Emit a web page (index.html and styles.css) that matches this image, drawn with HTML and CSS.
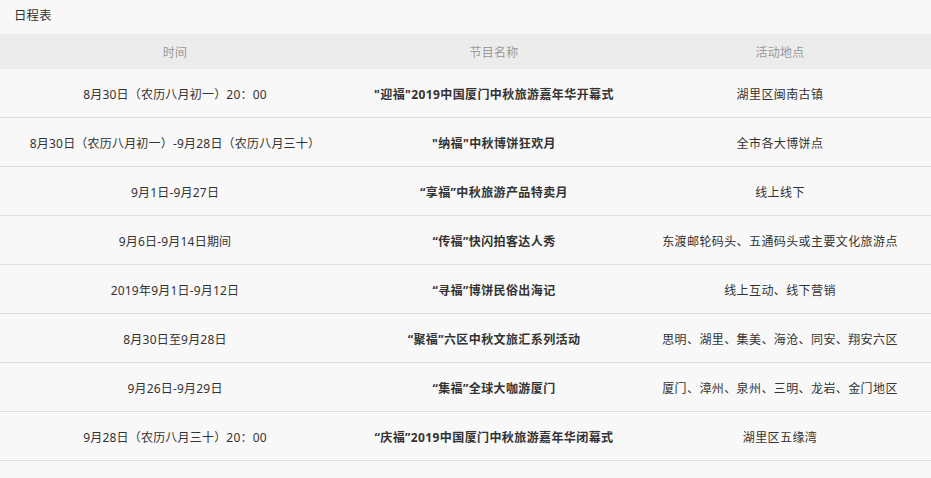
FILE: index.html
```html
<!DOCTYPE html>
<html lang="zh-CN">
<head>
<meta charset="utf-8">
<title>日程表</title>
<link rel="stylesheet" href="styles.css">
</head>
<body>
<div class="page">
  <div class="title">日程表</div>
  <table class="schedule">
    <colgroup>
      <col class="c-time">
      <col class="c-name">
      <col class="c-place">
    </colgroup>
    <thead>
      <tr><th>时间</th><th>节目名称</th><th class="place">活动地点</th></tr>
    </thead>
    <tbody>
      <tr><td>8月30日（农历八月初一）20：00</td><td class="name">"迎福"2019中国厦门中秋旅游嘉年华开幕式</td><td class="place">湖里区闽南古镇</td></tr>
      <tr><td>8月30日（农历八月初一）-9月28日（农历八月三十）</td><td class="name">"纳福"中秋博饼狂欢月</td><td class="place">全市各大博饼点</td></tr>
      <tr><td>9月1日-9月27日</td><td class="name">“享福”中秋旅游产品特卖月</td><td class="place">线上线下</td></tr>
      <tr><td>9月6日-9月14日期间</td><td class="name">“传福”快闪拍客达人秀</td><td class="place">东渡邮轮码头、五通码头或主要文化旅游点</td></tr>
      <tr><td>2019年9月1日-9月12日</td><td class="name">“寻福”博饼民俗出海记</td><td class="place">线上互动、线下营销</td></tr>
      <tr><td>8月30日至9月28日</td><td class="name">“聚福”六区中秋文旅汇系列活动</td><td class="place">思明、湖里、集美、海沧、同安、翔安六区</td></tr>
      <tr><td>9月26日-9月29日</td><td class="name">“集福”全球大咖游厦门</td><td class="place">厦门、漳州、泉州、三明、龙岩、金门地区</td></tr>
      <tr><td>9月28日（农历八月三十）20：00</td><td class="name">“庆福”2019中国厦门中秋旅游嘉年华闭幕式</td><td class="place">湖里区五缘湾</td></tr>
    </tbody>
  </table>
</div>
</body>
</html>
```
FILE: styles.css
```css
html, body {
  margin: 0;
  padding: 0;
  background: #f8f8f8;
}
body {
  font-family: "Noto Sans", "Noto Sans CJK SC", sans-serif;
  font-size: 12px;
  color: #333;
}
.page {
  width: 931px;
}
.title {
  height: 34px;
  line-height: 32px;
  padding-left: 14px;
  color: #333;
  font-size: 12.5px;
}
.schedule {
  width: 100%;
  border-collapse: collapse;
  table-layout: fixed;
}
.c-time { width: 350px; }
.c-name { width: 288px; }
.c-place { width: 293px; }
.schedule th {
  height: 35px;
  padding: 0;
  background: #ececec;
  color: #999;
  font-weight: normal;
  text-align: center;
  letter-spacing: 0.3px;
}
.schedule td {
  height: 47px;
  padding: 1px 0 0 0;
  text-align: center;
  border-bottom: 1px solid #dcdcdc;
  white-space: nowrap;
  letter-spacing: 0.2px;
}
.schedule td.place {
  letter-spacing: 0.4px;
}
.schedule .place {
  padding-right: 9px;
}
.schedule .name {
  font-weight: bold;
  letter-spacing: 0.4px;
}
```
